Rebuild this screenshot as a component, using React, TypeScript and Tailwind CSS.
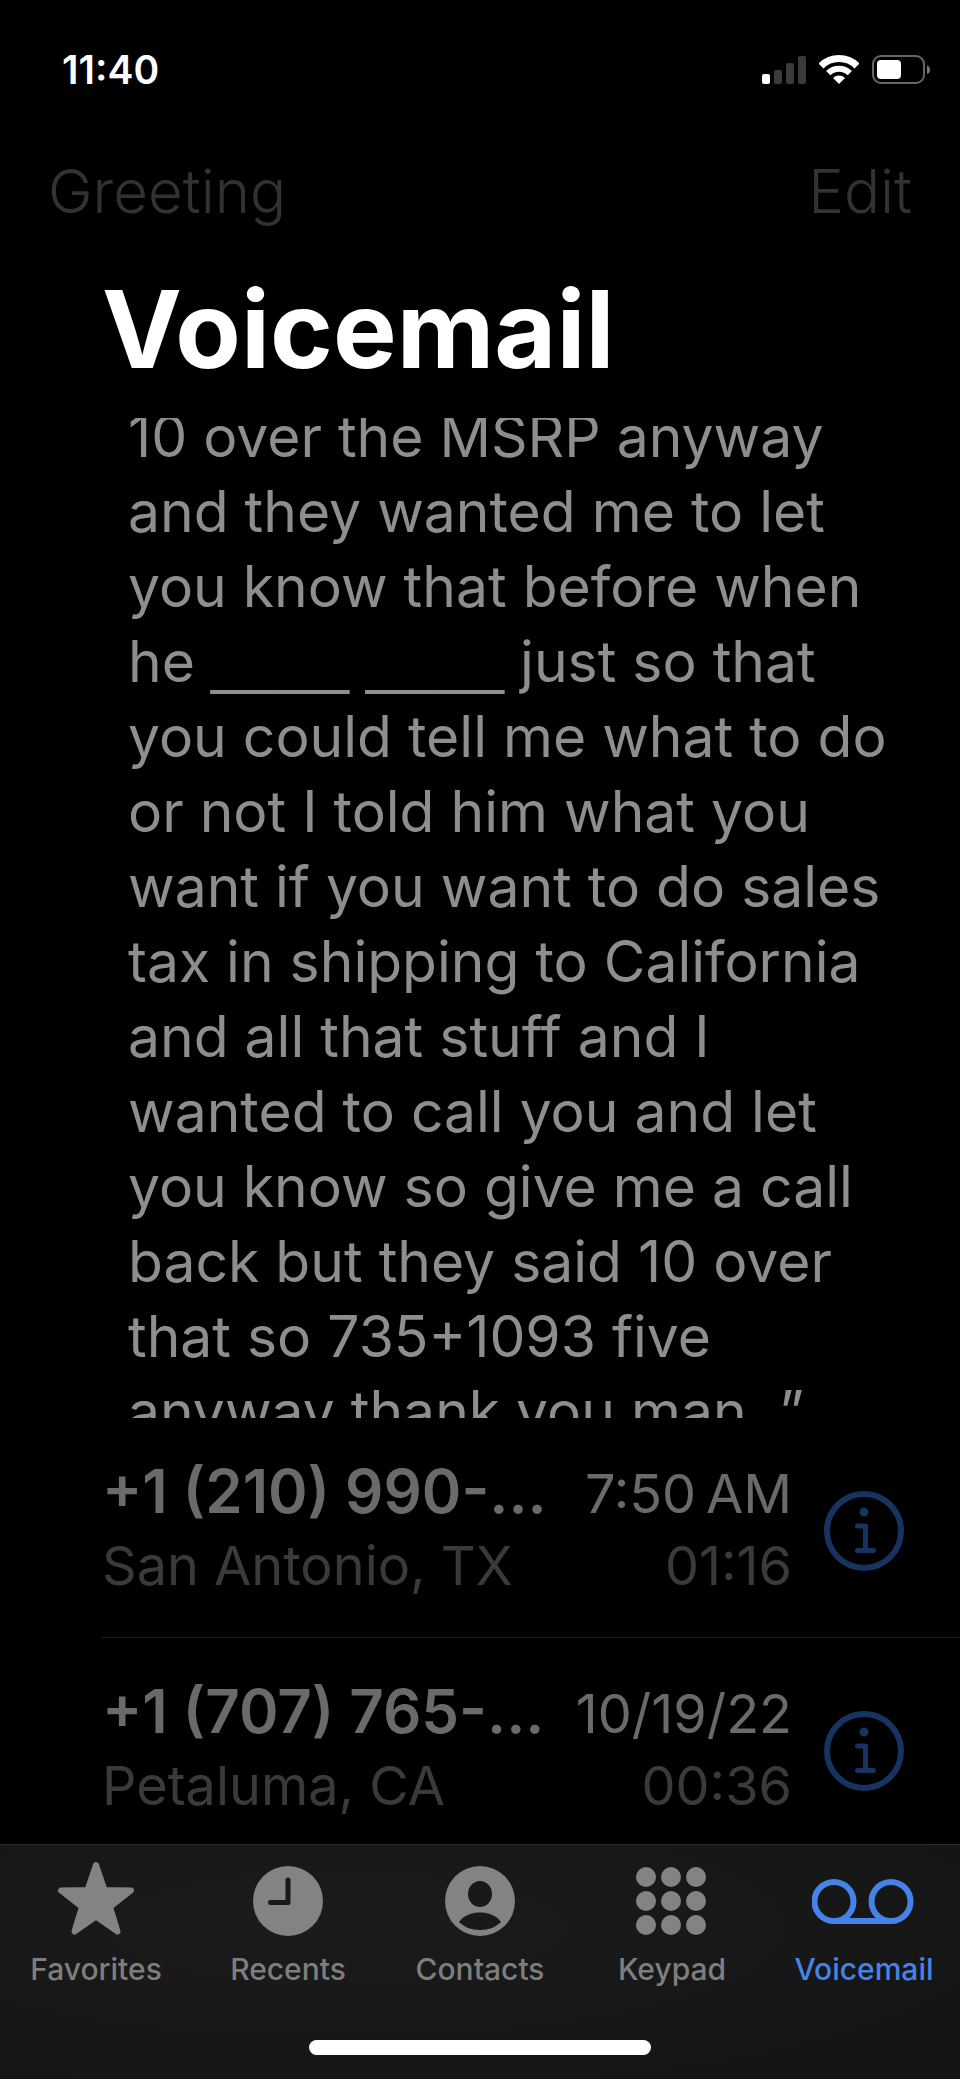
import React from "react";

const transcript = [
  "10 over the MSRP anyway",
  "and they wanted me to let",
  "you know that before when",
  "he ____ ____ just so that",
  "you could tell me what to do",
  "or not I told him what you",
  "want if you want to do sales",
  "tax in shipping to California",
  "and all that stuff and I",
  "wanted to call you and let",
  "you know so give me a call",
  "back but they said 10 over",
  "that so 735+1093 five",
  "anyway thank you man. ”",
];

const voicemails = [
  {
    phone: "+1 (210) 990-...",
    place: "San Antonio, TX",
    date: "7:50\u2009AM",
    length: "01:16",
  },
  {
    phone: "+1 (707) 765-...",
    place: "Petaluma, CA",
    date: "10/19/22",
    length: "00:36",
  },
];

const SignalIcon = () => (
  <svg width="44" height="30" viewBox="0 0 44 30" fill="#3a3a3a">
    <rect x="0" y="19" width="8" height="10" rx="2" fill="#fff" />
    <rect x="12" y="15" width="8" height="14" rx="2" />
    <rect x="24" y="8" width="8" height="21" rx="2" />
    <rect x="36" y="1" width="8" height="28" rx="2" />
  </svg>
);

const WifiIcon = () => (
  <svg width="40" height="30" viewBox="0 0 40 30" fill="none">
    <path d="M2 11A25.5 25.5 0 0 1 38 11" stroke="#fff" strokeWidth="7" />
    <path d="M9.2 18.2A15.3 15.3 0 0 1 30.8 18.2" stroke="#fff" strokeWidth="6" />
    <path d="M20 29L14 23A8.6 8.6 0 0 1 26 23Z" fill="#fff" />
  </svg>
);

const BatteryIcon = () => (
  <svg width="60" height="30" viewBox="0 0 60 30" fill="none">
    <rect x="1" y="1" width="51" height="27" rx="8" stroke="#666" strokeWidth="2" />
    <rect x="5" y="5" width="24" height="19" rx="4" fill="#fff" />
    <path d="M55 10.5C59 11.5 59 18 55 19Z" fill="#777" />
  </svg>
);

const InfoIcon = () => (
  <svg width="80" height="80" viewBox="0 0 80 80" fill="none" stroke="#17335f">
    <circle cx="40" cy="40" r="37" strokeWidth="6" />
    <circle cx="40" cy="21" r="4.5" fill="#17335f" stroke="none" />
    <path
      d="M33.5 35H41.5V59M33.5 59.5H49.5"
      strokeWidth="5"
      strokeLinecap="round"
      strokeLinejoin="round"
    />
  </svg>
);

const StarIcon = () => (
  <svg width="80" height="78" viewBox="0 0 80 78">
    <path
      d="M40 5L48.5 30L75 30.5L54 47L61.5 71.5L40 56.5L18.5 71.5L26 47L5 30.5L31.5 30Z"
      fill="#838383"
      stroke="#838383"
      strokeWidth="6"
      strokeLinejoin="round"
    />
  </svg>
);

const ClockIcon = () => (
  <svg width="80" height="78" viewBox="0 0 80 78" fill="none">
    <circle cx="40" cy="41" r="35" fill="#838383" />
    <path
      d="M40 20V42.5H22.5"
      stroke="#191919"
      strokeWidth="5"
      strokeLinecap="round"
      strokeLinejoin="round"
    />
  </svg>
);

const ContactIcon = () => (
  <svg width="80" height="78" viewBox="0 0 80 78">
    <circle cx="40" cy="41" r="35" fill="#838383" />
    <ellipse cx="40" cy="34" rx="12" ry="13" fill="#191919" />
    <path
      d="M19 62C24 55 32 52.5 40 52.5C48 52.5 56 55 61 62C56 67 49 70 40 70C31 70 24 67 19 62Z"
      fill="#191919"
    />
  </svg>
);

const KeypadIcon = () => (
  <svg width="80" height="78" viewBox="0 0 80 78" fill="#838383">
    {[17, 41, 65].map((y) =>
      [14, 39, 64].map((x) => <circle key={`${x}-${y}`} cx={x} cy={y} r="10" />)
    )}
  </svg>
);

const VoicemailIcon = () => (
  <svg width="104" height="78" viewBox="0 0 104 78" fill="none" stroke="#4583e8" strokeWidth="6">
    <circle cx="22" cy="41.5" r="19.5" />
    <circle cx="79" cy="41.5" r="19.5" />
    <path d="M22 61H79" />
  </svg>
);

const tabs = [
  { label: "Favorites", icon: <StarIcon /> },
  { label: "Recents", icon: <ClockIcon /> },
  { label: "Contacts", icon: <ContactIcon /> },
  { label: "Keypad", icon: <KeypadIcon /> },
  { label: "Voicemail", icon: <VoicemailIcon />, active: true },
];

// words the transcription could not make out are shown as wide blanks
const renderLine = (line: string) =>
  line.split(/(_+ _+)/).map((part, i) =>
    part.startsWith("_") ? (
      <span key={i} className="font-['Liberation_Sans'] text-[62px] leading-none">
        {part}
      </span>
    ) : (
      part
    )
  );

const App = () => {
  return (
    <div className="flex h-screen flex-col overflow-hidden bg-black font-['Inter','Liberation_Sans',sans-serif] text-white">
      {/* status bar */}
      <header className="flex items-center justify-between pt-12 pr-7 pl-[62px]">
        <span className="text-[39px] leading-[44px] font-semibold">11:40</span>
        <div className="flex items-center gap-[13px]">
          <SignalIcon />
          <WifiIcon />
          <BatteryIcon />
        </div>
      </header>

      {/* nav buttons */}
      <nav className="flex items-center justify-between px-12 pt-[62px] text-[60px] leading-[75px] font-light text-[#323232]">
        <button type="button">Greeting</button>
        <button type="button">Edit</button>
      </nav>

      <h1 className="px-[102px] pt-[34px] text-[107px] leading-[133px] font-bold">Voicemail</h1>

      <main className="flex min-h-0 flex-1 flex-col">
        <div className="mt-[22px] min-h-0 flex-1 overflow-hidden pl-32">
          <p className="-mt-[19px] text-[57px] leading-[75px] text-[#8e8e91]">
            {transcript.map((line) => (
              <span key={line} className="block whitespace-pre">
                {renderLine(line)}
              </span>
            ))}
          </p>
        </div>

        <ul className="pl-[102px]">
          {voicemails.map((item) => (
            <li
              key={item.phone}
              className="flex items-center border-b border-[#1a1a1a] pt-[37px] pr-14 pb-[35px] last:border-b-0 last:pb-[22px]"
            >
              <div className="flex-1">
                <div className="flex items-baseline justify-between leading-[72px]">
                  <span className="text-[60px] font-semibold text-[#6a6a6a]">{item.phone}</span>
                  <span className="text-[54px] text-[#6a6a6a]">{item.date}</span>
                </div>
                <div className="flex items-baseline justify-between text-[54px] leading-[72px] text-[#3a3a3a]">
                  <span>{item.place}</span>
                  <span>{item.length}</span>
                </div>
              </div>
              <button type="button" aria-label="Info" className="mt-1 ml-8">
                <InfoIcon />
              </button>
            </li>
          ))}
        </ul>
      </main>

      {/* tab bar */}
      <footer className="border-t border-[#2a2a2a] bg-[#171717] bg-radial-[at_35%_35%] from-[#1b1b1b] to-[#141414] pb-6">
        <div className="grid grid-cols-5 pt-[15px]">
          {tabs.map((tab) => (
            <button
              key={tab.label}
              type="button"
              className={`flex flex-col items-center gap-[13px] text-[30px] leading-9 font-medium ${
                tab.active ? "text-[#4583e8]" : "text-[#7e7e7e]"
              }`}
            >
              {tab.icon}
              <span>{tab.label}</span>
            </button>
          ))}
        </div>
        <div className="mx-auto mt-[53px] h-[15px] w-[342px] rounded-full bg-white" />
      </footer>
    </div>
  );
};

export default App;
